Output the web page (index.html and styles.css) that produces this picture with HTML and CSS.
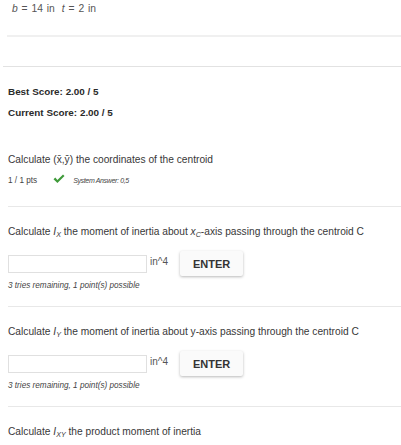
FILE: index.html
```html
<!DOCTYPE html>
<html>
<head>
<meta charset="utf-8">
<link rel="stylesheet" href="styles.css">
</head>
<body>
<div class="params"><span><i>b</i> = 14 in</span><span><i>t</i> = 2 in</span></div>
<div class="rule rule-top"></div>
<div class="rule rule-second"></div>
<div class="scores">
  <p class="score">Best Score: 2.00 / 5</p>
  <p class="score score-current">Current Score: 2.00 / 5</p>
</div>
<div class="question q-first">
  <p class="prompt">Calculate (x̄,ȳ) the coordinates of the centroid</p>
  <div class="result">
    <span class="pts">1 / 1 pts</span>
    <svg class="check" viewBox="0 0 12 10" width="12" height="10"><path d="M0.5 5.2 L2.3 3.6 L4.4 5.9 L10 0.6 L11.5 2 L4.4 8.9 Z" fill="#3f9a3a"/></svg>
    <span class="sys">System Answer: 0,5</span>
  </div>
</div>
<div class="question">
  <p class="prompt">Calculate <i>I<sub>X</sub></i> the moment of inertia about <i>x<sub>C</sub></i>-axis passing through the centroid C</p>
  <div class="answer">
    <span class="field"></span>
    <span class="unit">in^4</span>
    <span class="btn">ENTER</span>
  </div>
  <p class="tries">3 tries remaining, 1 point(s) possible</p>
</div>
<div class="question">
  <p class="prompt">Calculate <i>I<sub>Y</sub></i> the moment of inertia about y-axis passing through the centroid C</p>
  <div class="answer">
    <span class="field"></span>
    <span class="unit">in^4</span>
    <span class="btn">ENTER</span>
  </div>
  <p class="tries">3 tries remaining, 1 point(s) possible</p>
</div>
<div class="question">
  <p class="prompt">Calculate <i>I<sub>XY</sub></i> the product moment of inertia</p>
</div>
</body>
</html>
```
FILE: styles.css
```css
html, body {
  margin: 0;
  padding: 0;
  background: #fff;
}
body {
  font-family: "Liberation Sans", Arial, sans-serif;
  color: #383838;
  font-size: 10.2px;
  width: 401px;
  overflow: hidden;
}
p { margin: 0; }
.params {
  padding: 3px 0 0 12px;
  line-height: 12px;
  color: #555;
  font-size: 10.3px;
  display: flex;
  gap: 7px;
  word-spacing: 1px;
}
.rule { height: 1px; background: #e6e6e6; }
.rule-top { margin: 20px 0 0 7px; height: 2px; background: #f0f0f0; }
.rule-second { margin: 29px 0 0 3px; background: #e2e2e2; }
.scores { padding: 19px 0 0 8px; }
.score { font-weight: bold; line-height: 12px; font-size: 9.9px; color: #2a2a2a; }
.score-current { margin-top: 9px; }
.question {
  margin-left: 8px;
  border-top: 1px solid #e8e8e8;
  padding-top: 19px;
  padding-bottom: 15px;
}
.q-first {
  border-top: none;
  margin-top: 35px;
  padding-top: 0;
  padding-bottom: 20px;
}
.prompt { line-height: 12px; }
.prompt i { font-style: italic; }
sub { font-size: 70%; vertical-align: -2px; line-height: 0; }
.result {
  margin-top: 8px;
  display: flex;
  align-items: center;
  height: 12px;
  font-size: 8.2px;
}
.pts { color: #444; }
.check { margin-left: 16px; margin-top: -2px; }
.sys { margin-left: 8px; font-style: italic; color: #444; font-size: 7px; letter-spacing: -0.35px; }
.answer {
  margin-top: 13px;
  display: flex;
  align-items: center;
  height: 25px;
}
.field {
  width: 137px;
  height: 16px;
  border: 1px solid #e0e0e0;
  background: #fff;
}
.unit { margin-left: 3px; font-size: 10px; color: #555; align-self: flex-start; margin-top: 5px; }
.btn {
  margin-left: 12px;
  width: 63px;
  height: 25px;
  display: flex;
  align-items: center;
  justify-content: center;
  background: #fafafa;
  border-radius: 2px;
  box-shadow: 0 1px 3px rgba(0,0,0,0.28);
  font-weight: bold;
  font-size: 11px;
  color: #333;
}
.tries {
  margin-top: 5px;
  line-height: 10px;
  font-style: italic;
  font-size: 8.2px;
  color: #444;
}
```
